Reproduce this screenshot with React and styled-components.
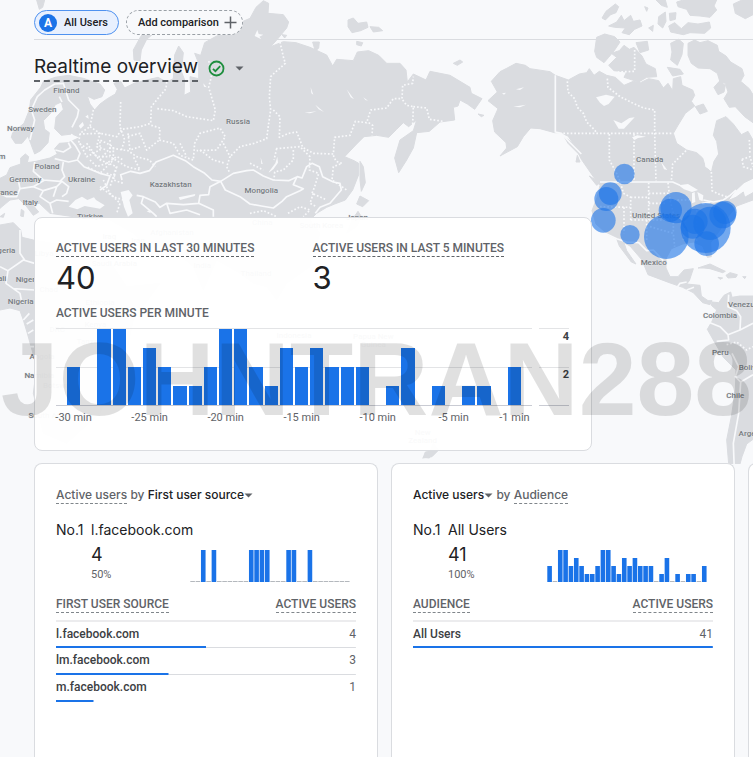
import React from "react";
import styled, { createGlobalStyle } from "styled-components";

const GlobalStyle = createGlobalStyle`
  * {
    box-sizing: border-box;
  }

  body {
    margin: 0;
    background: #f8f9fb;
    color: #202124;
    font-family: Roboto, "Liberation Sans", sans-serif;
    overflow: hidden;
  }

  button {
    font: inherit;
    color: inherit;
    cursor: pointer;
  }
`;

const minutes = [
  2, 0, 4, 4, 2, 3, 2, 1, 1, 2, 4, 4, 2, 1, 3, 2, 3, 2, 2, 2, 0, 1, 3, 0, 1, 0,
  1, 1, 0, 2,
];

const facebook = minutes.map((value, i) =>
  [2, 4, 11, 12, 13, 14, 18, 19, 22].includes(i) ? 1 : 0
);

const ticks = {
  0: "-30 min",
  5: "-25 min",
  10: "-20 min",
  15: "-15 min",
  20: "-10 min",
  25: "-5 min",
  29: "-1 min",
};

/* ---------- map ---------- */

const land = [
  // Europe and Asia
  "M0 535L20 525 30 503 62 492 62 474 76 462 86 470 82 488 108 484 150 474 172 462 164 446 178 430 205 428 240 412 216 402 184 406 164 386 168 352 190 328 184 306 166 314 150 342 130 362 134 388 148 398 144 428 122 452 104 462 92 430 84 408 66 430 46 430 34 412 38 398 72 370 88 330 92 300 122 262 130 245 165 232 205 226 250 235 300 252 314 270 306 290 282 298 262 288 270 312 284 330 300 312 322 296 346 282 352 268 342 250 362 244 374 264 402 250 440 240 474 232 500 246 520 236 524 165 536 138 550 158 544 214 554 240 552 286 572 276 570 230 596 236 596 190 584 160 602 166 614 128 650 108 690 95 720 68 750 55 768 22 790 2 806 10 804 40 850 44 866 66 860 84 832 118 812 140 850 125 888 128 930 142 980 165 998 198 1010 178 1060 182 1072 156 1106 152 1136 166 1160 190 1200 190 1218 210 1222 246 1240 222 1278 240 1290 214 1350 226 1410 262 1414 280 1446 296 1424 328 1402 312 1380 300 1374 318 1360 322 1364 360 1320 366 1288 394 1250 398 1240 444 1220 480 1196 518 1184 474 1200 420 1240 392 1250 360 1226 380 1210 368 1190 388 1166 412 1130 406 1092 410 1070 432 1034 470 1062 482 1076 490 1076 524 1058 570 1036 600 1004 612 980 622 950 640 930 660 960 700 930 800 860 850 830 900 800 860 760 850 720 820 650 780 610 870 580 800 520 750 440 740 400 700 330 660 220 650 150 640 118 610 96 612 116 636 100 646 80 620 56 596 30 600 0 625Z",
  // Africa
  "M0 675L40 668 62 690 66 712 100 720 160 730 300 740 380 860 480 850 400 960 370 1100 300 1240 200 1330 130 1300 100 1180 110 1100 82 1000 70 960 60 932 30 924 0 930Z",
  "M0 650L14 640 10 652ZM64 628L72 634 70 650 62 648Z",
  // Arctic coast islands
  "M402 180L400 150 422 110 450 72 480 60 476 88 440 118 424 150 420 182ZM110 0L134 0 128 22 118 28Z",
  "M1044 60L1060 54 1074 70 1100 66 1104 82 1082 92 1056 98 1044 80ZM1110 80L1136 82 1148 92 1120 96ZM1070 124L1088 128 1084 138 1070 134ZM938 126L958 126 956 144 946 154ZM1360 190L1380 180 1388 186 1372 196ZM1434 342L1452 346 1444 350ZM846 104L860 106 854 114Z",
  // Sakhalin and Japan
  "M1080 484L1090 500 1096 548 1084 574 1080 540ZM1080 588L1106 602 1088 620 1070 612ZM1074 634L1084 650 1070 680 1040 700 1056 660Z",
  // North America
  "M1500 215L1520 205 1548 190 1576 196 1590 206 1650 215 1666 226 1705 240 1738 222 1760 218 1768 206 1782 226 1798 214 1820 226 1846 232 1872 256 1900 244 1922 248 1946 236 1976 242 1990 264 2004 250 2018 272 2020 236 2042 230 2046 256 2078 270 2084 286 2074 304 2084 318 2056 340 2034 376 2020 400 2030 430 2060 450 2090 458 2108 474 2116 500 2134 516 2142 484 2156 462 2150 424 2140 406 2150 362 2178 350 2200 372 2224 404 2244 394 2259 420 2259 535 2232 548 2202 576 2184 602 2208 592 2230 576 2234 592 2259 578 2259 600 2210 618 2176 660 2160 690 2132 728 2134 770 2122 772 2108 738 2080 726 2048 732 2014 746 1998 776 1998 804 2010 830 2034 830 2052 810 2080 806 2068 842 2060 852 2100 856 2104 888 2124 902 2136 902 2130 914 2108 908 2080 878 2048 862 2008 848 1944 824 1926 780 1890 738 1872 728 1880 752 1908 792 1894 786 1858 738 1850 716 1824 704 1788 672 1776 632 1792 590 1800 556 1780 530 1744 478 1726 440 1704 408 1680 398 1664 398 1620 386 1592 384 1570 410 1552 440 1500 468 1520 444 1518 428 1484 396 1478 362 1494 326 1464 302 1492 276 1474 244Z",
  "M1694 412L1712 424 1744 462 1740 466 1704 430ZM1732 466L1740 486 1728 486ZM1768 528L1800 548 1790 556Z",
  // Canadian Arctic
  "M1790 112L1814 102 1844 110 1860 126 1844 150 1826 172 1812 188 1790 172 1784 154Z",
  "M1826 196L1850 172 1834 160 1858 152 1872 136 1888 148 1902 142 1926 168 1938 192 1966 206 1970 230 1940 232 1916 246 1872 232 1880 216 1842 212ZM1908 128L1942 124 1946 150 1920 158ZM2012 130L2036 118 2050 130 2046 164 2032 196 2012 180 2016 156ZM2002 202L2040 208 2050 222 2018 228Z",
  "M2064 130L2084 120 2100 128 2124 122 2152 136 2156 154 2178 168 2192 186 2226 206 2232 226 2222 244 2248 266 2259 284 2259 368 2234 350 2206 320 2188 322 2172 296 2184 276 2176 250 2160 246 2152 220 2130 206 2094 204 2074 190 2064 166ZM2142 262L2158 244 2176 256 2172 276 2154 284ZM2086 320L2110 312 2122 334 2100 342Z",
  "M1806 54L1818 34 1846 12 1856 20 1848 38 1832 44 1816 60ZM1826 78L1850 66 1864 46 1872 62 1892 46 1900 64 1920 60 1926 78 1904 88 1888 104 1866 98 1876 84 1844 82ZM1934 20L1944 24 1940 34ZM1976 50L1996 36 1998 64 1988 84 1974 72ZM1946 84L1960 76 1958 94ZM1968 0L1996 0 2002 22 1984 16ZM2008 40L2028 38 2026 58 2010 62ZM2006 78L2024 68 2044 86 2064 68 2094 72 2128 66 2132 84 2114 100 2070 98 2050 104 2012 96ZM2030 6L2050 0 2150 0 2142 18 2150 30 2130 52 2100 48 2070 46 2060 28 2034 20Z",
  "M2200 12L2226 0 2259 0 2259 44 2236 56 2206 40Z",
  // Caribbean
  "M2094 804L2130 792 2176 814 2168 818 2130 806 2112 804ZM2178 826L2190 818 2212 824 2208 832 2184 834ZM2154 832L2168 834 2160 838ZM2228 830L2238 830 2234 836Z",
  // South America
  "M2136 906L2156 908 2172 886 2192 876 2196 892 2220 888 2259 888 2259 1318 2240 1332 2226 1370 2204 1450 2190 1440 2180 1320 2194 1250 2206 1170 2208 1110 2170 1072 2140 1020 2122 988 2136 964 2150 930 2134 916Z",
  // New Zealand
  "M1300 1330L1316 1350 1296 1370 1268 1374 1290 1354ZM1276 1356L1302 1352 1288 1374 1270 1372Z",
];

const water = [
  "M206 620L226 600 246 590 262 600 282 592 288 600 314 616 300 626 254 618 232 628Z",
  "M362 576L386 570 398 586 388 600 398 640 384 650 372 620Z",
  "M236 378L248 366 252 376 242 386ZM256 350L264 344 266 356ZM440 634L450 630 452 640ZM536 592L586 582 584 588 540 600Z",
  "M808 514L826 490 832 470 834 488 820 508 806 518ZM782 472L788 492 784 492Z",
  "M932 262L940 284 934 280ZM946 314L972 336 956 328ZM914 338L950 334 930 340ZM1040 268L1062 298 1052 292ZM1090 292L1104 302 1096 300Z",
  "M764 108L772 90 776 102 790 104 778 110 784 118ZM610 250L620 262 612 260ZM504 226L512 232 506 246Z",
  "M1788 292L1818 284 1844 290 1826 312 1812 318 1800 308ZM1840 360L1864 370 1888 354 1904 352 1872 386 1856 386ZM1896 412L1912 406 1938 410 1914 414 1904 420ZM1982 484L2002 510 1992 508ZM2114 470L2130 478 2134 512 2116 500Z",
  "M2036 556L2064 552 2094 570 2076 576 2052 568ZM2076 580L2084 576 2086 606 2076 610ZM2092 576L2110 586 2108 604 2098 600ZM2104 608L2134 602 2130 610 2108 614Z",
  "M1540 320L1578 314 1560 322ZM1548 268L1572 262 1560 270ZM1506 280L1518 278 1512 284Z",
];

const borders = [
  "M90 420L104 360 94 330 112 290 134 270 164 252 190 250 206 300 236 330 232 350 216 382",
  "M178 290L186 306M216 402L212 420 226 436 240 460 232 480 206 486 164 476M205 428L212 442 190 456 166 450M190 486L186 510 194 530 180 544 130 540 100 514 104 486M232 480L252 500 300 520 330 528 320 556 300 570M30 530L56 546 60 566 100 560 134 540M60 566L50 590 20 590 0 580M100 560L130 572 170 560 186 544 206 560 200 580 186 590M130 572L120 590 150 610 170 600 206 604M150 610L158 640M170 560L160 590",
  "M366 540L362 524 392 514 420 520 448 512 468 486 520 466 556 482 580 500 614 520 636 540 662 544 630 560 626 584 600 586 596 610 550 614 500 610 480 622 466 606 430 590 410 586",
  "M662 544L700 520 740 512 760 510 790 528 820 540 866 542 892 530 906 534 920 500 936 490 958 500 968 530 1000 546 1020 550 1024 570 990 610 960 622 946 640",
  "M662 544L676 570 720 590 750 612 784 618 820 624 846 604 860 590 900 572 910 566 880 554 890 532M596 610L640 630 640 650M430 590L424 610 460 640 470 650M500 610L510 640 560 630 600 644",
  "M1666 226L1666 396 1684 400 1710 428 1744 462M1800 546L2018 546 2040 556M2110 600L2140 606 2170 600 2190 586 2208 570",
  "M1812 698L1850 716 1880 726 1916 728 1940 752 1960 750 1990 782",
  "M2030 864L2040 850 2060 846M2060 870L2082 862M2186 884L2184 920 2210 932 2222 950 2220 990M2130 968L2160 980 2184 1004 2186 1020 2150 1024M2184 1004L2220 990 2259 970M2196 1060L2216 1100 2206 1130 2222 1146 2259 1124M2222 1146L2216 1240 2200 1330 2204 1440",
  "M0 800L24 812 70 780 104 790M24 812L18 850 60 880 66 910M60 690L60 760 74 780M104 870L40 866M88 940L70 960M100 960L80 972M100 990L84 1000M110 1040L86 1040",
];

const provinces = [
  "M280 330L270 380 240 400 236 430 270 450 300 480 350 500 330 560",
  "M500 246L498 266 470 300 454 320 452 370 420 380 366 388 350 410 300 400 240 402",
  "M362 306L360 380 374 420 364 450M472 326L520 332 560 350 600 356 640 362 646 330 626 262 634 230 626 180M300 480L330 444 384 452 410 470 448 480 466 500",
  "M454 376L480 384 478 420 440 450 420 400 380 410M478 420L520 430 540 466 580 480 584 430 600 400 660 384 676 410 650 450 590 452M670 430L690 470 680 500 690 520",
  "M240 430L260 470 300 450 300 420 340 440 340 480 300 520 260 500M330 420L330 470 380 500 420 510 400 470M350 500L340 540 370 550M300 560L340 590 370 600",
  "M270 380L300 400 290 440 320 450M384 400L390 450 420 440M260 430L290 470 330 470M270 480L290 500 320 490 350 470 370 480M320 520L350 530M310 540L330 580 360 610 350 640M540 430L560 470M600 450L640 480 676 490",
  "M840 126L850 170 856 190 820 222 812 230 808 290 812 330 806 370 800 416 762 430 720 440 690 470",
  "M820 330L840 350 838 412 866 400 890 396 900 420 908 442 940 460 1000 462 1004 412 1050 406 1066 364 1100 368 1112 330 1160 324 1180 296 1206 296 1208 256 1238 250 1240 230M1208 300L1220 316 1240 320 1238 372M1240 320L1280 324 1288 358 1330 364M1106 368L1118 376 1116 406",
  "M828 446L900 440 930 470 928 510 956 520 944 560 936 580 980 600M830 446L822 480M880 450L880 480 850 510 824 516 822 540M1000 466L1008 484 1026 490 1000 500 996 540 1040 570M750 490L790 510M750 640L790 632 830 650M864 640L900 620 930 630 910 650M940 580L930 610 950 620",
  "M1690 400L2020 400M1702 244L1704 276 1724 296 1732 322 1750 340 1760 366 1782 388 1790 398M1822 236L1824 262 1860 290 1896 308 1930 324 1964 330 1964 400 1968 544M1828 402L1828 480 1850 520 1860 544M1902 402L1902 544M2058 452L2018 492 2014 544M2134 516L2136 572 2160 584 2180 590M1904 150L1904 214 1850 216",
  "M1946 548L1946 660M1862 548L1870 580 1892 592 1892 660M1800 620L1890 622M1872 622L1872 700M1892 592L1946 592M1946 580L2010 580M1946 610L2000 610M1892 660L2016 660M2004 548L2010 600 2020 640 2020 700M1940 660L1940 720M1950 680L2020 700 2024 740M2010 600L2070 600M2060 640L2050 720M2090 630L2090 724M2226 478L2250 470 2259 500M2226 478L2230 500 2259 510M2248 420L2250 460",
  "M2180 1034L2210 1026 2240 1050 2259 1040",
];

const bubbles = [
  [1873, 522, 31],
  [1831, 581, 34],
  [1819, 597, 36],
  [1810, 661, 37],
  [1890, 704, 29],
  [2028, 623, 47],
  [2011, 631, 35],
  [1999, 710, 67],
  [2117, 684, 75],
  [2085, 664, 38],
  [2078, 680, 36],
  [2130, 670, 50],
  [2120, 731, 37],
  [2168, 645, 40],
  [2175, 637, 35],
];

const places = [
  ["Finland", 199, 278],
  ["Sweden", 127, 335],
  ["Norway", 62, 393],
  ["Poland", 141, 506],
  ["Germany", 76, 546],
  ["Ukraine", 245, 546],
  ["France", 16, 586],
  ["Italy", 91, 616],
  ["m", 6, 476],
  ["Türkiye", 270, 658],
  ["Russia", 714, 372],
  ["Kazakhstan", 512, 562],
  ["Mongolia", 784, 579],
  ["Japan", 1071, 660],
  ["Canada", 1949, 485],
  ["United States", 1968, 653],
  ["Mexico", 1961, 795],
  ["Venezuela", 2240, 921],
  ["Colombia", 2160, 953],
  ["Peru", 2161, 1065],
  ["Bolivia", 2252, 1111],
  ["Chile", 2206, 1194],
  ["Argentina", 2268, 1307],
  ["Algeria", 8, 758],
  ["Mali", -4, 843],
  ["Niger", 76, 846],
  ["Nigeria", 62, 911],
  ["Angola", 126, 1076],
  ["Namibia", 118, 1133],
  ["South Africa", 152, 1253],
  ["Libya", 132, 768],
  ["Chad", 146, 876],
  ["DRC", 172, 996],
  ["Botswana", 182, 1165],
  ["Kenya", 286, 980],
  ["Tanzania", 278, 1032],
  ["Ethiopia", 300, 916],
  ["Iraq", 328, 716],
  ["Iran", 414, 730],
  ["Saudi Arabia", 343, 798],
  ["Afghanistan", 516, 704],
  ["India", 607, 804],
  ["China", 787, 675],
  ["Thailand", 768, 828],
  ["South Korea", 964, 685],
  ["Indonesia", 882, 1014],
  ["Papua New", 1120, 1016],
  ["Guinea", 1120, 1040],
  ["New", 1268, 1306],
  ["Zealand", 1268, 1330],
];

const MapSvg = styled.svg`
  position: absolute;
  top: 0;
  left: 0;
  width: 100%;
  z-index: -1;

  text {
    fill: #757a80;
    stroke: #e6e8ea;
    stroke-width: 2px;
    paint-order: stroke;
    font-size: 24px;
    font-weight: 500;
    text-anchor: middle;
  }
`;

const WorldMap = () => (
  <MapSvg viewBox="0 0 2259 1392" role="img" aria-label="Active users by location">
    <g fill="#dadce0" stroke="#dadce0" strokeWidth="3" strokeLinejoin="round">
      {land.map((d) => (
        <path key={d} d={d} />
      ))}
    </g>
    <g fill="#f8f9fb">
      {water.map((d) => (
        <path key={d} d={d} />
      ))}
    </g>
    <g fill="none" stroke="#f8f9fb" strokeLinejoin="round">
      {borders.map((d) => (
        <path key={d} d={d} strokeWidth="5" />
      ))}
      {provinces.map((d) => (
        <path key={d} d={d} strokeWidth="5" strokeDasharray="5 6" />
      ))}
    </g>
    {places.map(([name, x, y]) => (
      <text key={name} x={x} y={y}>
        {name}
      </text>
    ))}
    <g fill="#1a73e8" fillOpacity="0.6">
      {bubbles.map(([x, y, r]) => (
        <circle key={`${x}-${y}`} cx={x} cy={y} r={r} />
      ))}
    </g>
  </MapSvg>
);

/* ---------- page ---------- */

const Page = styled.main`
  position: relative;
  z-index: 0;
  display: flex;
  flex-direction: column;
  height: 100vh;
  min-height: 700px;
  padding-left: 34px;
  overflow: hidden;
`;

const Comparisons = styled.div`
  display: flex;
  gap: 7px;
  padding: 10px 0 4px;
  border-bottom: 1px solid #dadce0;
`;

const Chip = styled.button`
  display: flex;
  align-items: center;
  height: 25px;
  gap: ${({ $active }) => ($active ? "7px" : "5px")};
  padding: ${({ $active }) => ($active ? "0 10px 0 4px" : "0 5px 0 11px")};
  border: 1px ${({ $active }) => ($active ? "solid #4f92f0" : "dashed #9aa0a6")};
  border-radius: 13px;
  background: ${({ $active }) => ($active ? "#e8f0fe" : "#f8f9fb")};
  font-size: 11px;
  font-weight: 500;
`;

const Badge = styled.span`
  display: grid;
  place-items: center;
  width: 18px;
  height: 18px;
  border-radius: 50%;
  background: #1a73e8;
  color: #fff;
  font-size: 12px;
  font-weight: 700;
`;

const TitleRow = styled.header`
  display: flex;
  align-items: center;
  gap: 10px;
  height: 177px;
  padding-bottom: 121px;

  h1 {
    margin: 0;
    border-bottom: 2px dashed #5f6368;
    font-family: Inter, Roboto, sans-serif;
    font-size: 19px;
    font-weight: 400;
    line-height: 26px;
  }
`;

const IconButton = styled.button`
  display: flex;
  padding: 0;
  border: 0;
  background: none;
`;

const Overview = styled.section`
  width: calc(100% - 161px);
  padding: 23px 22px 24px 21px;
  border: 1px solid #dadce0;
  border-radius: 8px;
  background: rgba(255, 255, 255, 0.96);
`;

const Metrics = styled.div`
  display: grid;
  grid-template-columns: 1fr 1fr;
`;

const Label = styled.h2`
  width: fit-content;
  margin: 0;
  border-bottom: ${({ $dashed }) => ($dashed ? "1px dashed #5f6368" : "0")};
  color: #5f6368;
  font-size: 12px;
  font-weight: 500;
  line-height: 15px;
`;

const Big = styled.p`
  margin: 0 0 8px;
  font-family: Inter, Roboto, sans-serif;
  font-size: 31px;
  line-height: 41px;
`;

const Chart = styled.div`
  display: flex;
  gap: 7px;
  height: 78px;
  margin: 7px 0 20px;
`;

const Grid = styled.div`
  flex: ${({ $axis }) => ($axis ? "0 0 30px" : "1")};
  display: flex;
  padding: ${({ $axis }) => ($axis ? "0" : "0 11px")};
  border-top: 1px solid #e3e4e6;
  border-bottom: 1px solid #c9cbd3;
  background: linear-gradient(#e3e4e6, #e3e4e6) 0 38px / 100% 1px no-repeat;
  gap: 2px;
`;

const Column = styled.div`
  flex: 1 1 0;
  min-width: 0;
  display: flex;
  flex-direction: column;
  align-items: center;
  justify-content: flex-end;
`;

const Bar = styled.div`
  flex: none;
  width: 100%;
  background: #1a73e8;
`;

const Tick = styled.span`
  height: 0;
  color: #5f6368;
  font-size: 11px;
  line-height: 26px;
  white-space: nowrap;
`;

const AxisLabels = styled.div`
  width: 100%;
  font-size: 11px;
  font-weight: 700;
  line-height: 16px;
  text-align: right;
  color: #3c4043;

  span {
    display: block;
    height: 38px;
  }
`;

const Cards = styled.div`
  flex: 1;
  display: flex;
  gap: 13px;
  margin-top: 12px;
`;

const CardBox = styled.section`
  flex: 0 0 calc((100% - 31px) / 2);
  padding: 22px 21px;
  border: 1px solid #dadce0;
  border-bottom: 0;
  border-radius: 8px 8px 0 0;
  background: #fff;
`;

const CardTitle = styled.h2`
  margin: 0 0 15px;
  color: #5f6368;
  font-family: Inter, Roboto, sans-serif;
  font-size: 12px;
  font-weight: 500;
  line-height: 18px;
`;

const Dotted = styled.span`
  padding-bottom: 1px;
  border-bottom: 1px dashed #80868b;
`;

const Picker = styled.button`
  display: inline-flex;
  align-items: center;
  padding: 0;
  border: 0;
  background: none;
  color: #202124;
`;

const Leader = styled.div`
  display: grid;
  grid-template-columns: 35px 1fr 160px;
  padding-right: 6px;
  font-family: Inter, Roboto, sans-serif;
`;

const Rank = styled.span`
  font-size: 14px;
  font-weight: 400;
  line-height: 22px;
`;

const LeaderName = styled(Rank)`
  grid-column: 2 / 4;
`;

const Count = styled.div`
  grid-column: 2;
  font-size: 18px;
  line-height: 28px;

  small {
    display: block;
    color: #5f6368;
    font-family: Roboto, sans-serif;
    font-size: 11px;
    line-height: 12px;
  }
`;

const Spark = styled.svg`
  width: 160px;
  height: 32px;
  margin-top: 9px;
`;

const Table = styled.table`
  width: 100%;
  margin-top: 15px;
  border-collapse: collapse;
  font-size: 12px;

  th,
  td {
    padding: 0 0 3px;
    text-align: left;
  }

  th:last-child,
  td:last-child {
    text-align: right;
  }

  thead th {
    height: 24px;
    border-bottom: 2px solid #ececee;
    color: #5f6368;
    font-weight: 500;
    vertical-align: top;
    line-height: 15px;
  }

  tbody th {
    color: #3c4043;
    font-weight: 500;
  }

  td {
    color: #5f6368;
  }
`;

const Row = styled.tr`
  height: 27px;
  background-image: linear-gradient(#1a73e8, #1a73e8),
    linear-gradient(#dadce0, #dadce0);
  background-size: ${({ $share }) => $share}% 2px, ${({ $last }) => ($last ? "0" : "100%")} 1px;
  background-position: 0 100%;
  background-repeat: no-repeat;
`;

const Watermark = styled.div`
  position: absolute;
  top: 319px;
  left: 0;
  width: 100%;
  color: rgba(0, 0, 0, 0.12);
  font-family: "Liberation Sans", Arial, sans-serif;
  font-size: 104px;
  font-weight: 700;
  line-height: 120px;
  text-align: center;
  pointer-events: none;
  white-space: nowrap;
`;

const Caret = () => (
  <svg width="9" height="5" viewBox="0 0 8 5" aria-hidden="true">
    <path d="M0 0.5h8L4 4.5z" fill="#5f6368" />
  </svg>
);

const Sparkline = ({ values }) => {
  const top = Math.max(...values);
  return (
    <Spark viewBox="0 0 160 32" aria-hidden="true">
      {values.map((value, i) => {
        const x = (i * 160) / 30;
        const h = value ? (value / top) * 32 : 1;
        return (
          <rect
            key={i}
            x={x + 0.3}
            y={value ? 32 - h : 31}
            width="4.6"
            height={h}
            fill={value ? "#1a73e8" : "#b4b8bd"}
          />
        );
      })}
    </Spark>
  );
};

const UserCard = ({ title, name, count, percent, values, heading, rows }) => (
  <CardBox>
    <CardTitle>{title}</CardTitle>
    <Leader>
      <Rank>No.1</Rank>
      <LeaderName>{name}</LeaderName>
      <Count>
        {count}
        <small>{percent}</small>
      </Count>
      <Sparkline values={values} />
    </Leader>
    <Table>
      <thead>
        <tr>
          <th scope="col">
            <Dotted>{heading}</Dotted>
          </th>
          <th scope="col">
            <Dotted>ACTIVE USERS</Dotted>
          </th>
        </tr>
      </thead>
      <tbody>
        {rows.map(([label, value, share], i) => (
          <Row key={label} $share={share} $last={i === 2}>
            <th scope="row">{label}</th>
            <td>{value}</td>
          </Row>
        ))}
      </tbody>
    </Table>
  </CardBox>
);

const App = () => {
  return (
    <>
      <GlobalStyle />
      <Page>
        <WorldMap />

        <Comparisons>
          <Chip $active>
            <Badge>A</Badge>
            All Users
          </Chip>
          <Chip>
            Add comparison
            <svg width="13" height="13" viewBox="0 0 13 13" aria-hidden="true">
              <path d="M6.5 0.5v12M0.5 6.5h12" stroke="#5f6368" strokeWidth="1.5" />
            </svg>
          </Chip>
        </Comparisons>

        <TitleRow>
          <h1>Realtime overview</h1>
          <IconButton aria-label="Data quality">
            <svg width="17" height="17" viewBox="0 0 17 17" fill="none" stroke="#1e8e3e">
              <circle cx="8.5" cy="8.5" r="7" strokeWidth="1.8" />
              <path d="M5 8.8l2.4 2.4 4.8-5" strokeWidth="1.8" />
            </svg>
          </IconButton>
          <IconButton aria-label="More options">
            <Caret />
          </IconButton>
        </TitleRow>

        <Overview>
          <Metrics>
            <div>
              <Label $dashed>ACTIVE USERS IN LAST 30 MINUTES</Label>
              <Big>40</Big>
            </div>
            <div>
              <Label $dashed>ACTIVE USERS IN LAST 5 MINUTES</Label>
              <Big>3</Big>
            </div>
          </Metrics>
          <Label>ACTIVE USERS PER MINUTE</Label>
          <Chart>
            <Grid>
              {minutes.map((value, i) => (
                <Column key={i}>
                  <Bar style={{ height: `${value * 25}%` }} />
                  {ticks[i] && <Tick>{ticks[i]}</Tick>}
                </Column>
              ))}
            </Grid>
            <Grid $axis>
              <AxisLabels>
                <span>4</span>
                <span>2</span>
              </AxisLabels>
            </Grid>
          </Chart>
        </Overview>

        <Cards>
          <UserCard
            title={
              <>
                <Dotted>Active users</Dotted> by{" "}
                <Picker>
                  First user source
                  <Caret />
                </Picker>
              </>
            }
            name="l.facebook.com"
            count="4"
            percent="50%"
            values={facebook}
            heading="FIRST USER SOURCE"
            rows={[
              ["l.facebook.com", 4, 50],
              ["lm.facebook.com", 3, 37.5],
              ["m.facebook.com", 1, 12.5],
            ]}
          />
          <UserCard
            title={
              <>
                <Picker>
                  Active users
                  <Caret />
                </Picker>{" "}
                by <Dotted>Audience</Dotted>
              </>
            }
            name="All Users"
            count="41"
            percent="100%"
            values={minutes}
            heading="AUDIENCE"
            rows={[["All Users", 41, 100]]}
          />
          <CardBox />
        </Cards>

        <Watermark aria-hidden="true">JOHNTRAN288</Watermark>
      </Page>
    </>
  );
};

export default App;
